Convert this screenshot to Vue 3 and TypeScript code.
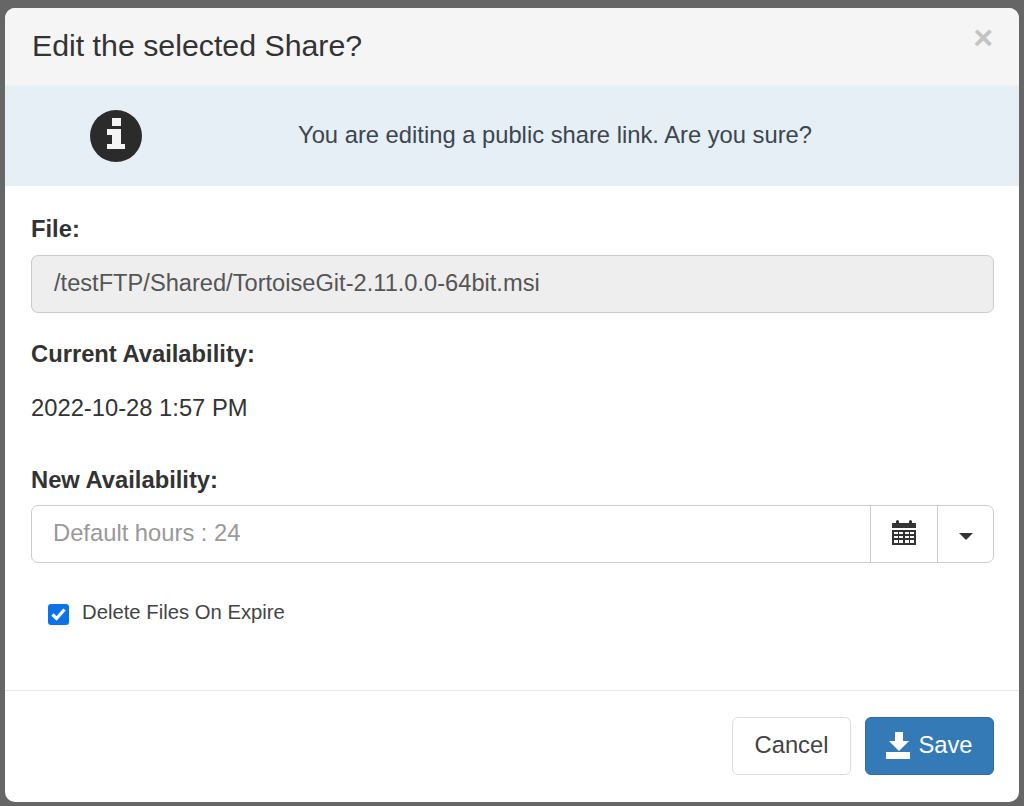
<script setup lang="ts">
const title: string = 'Edit the selected Share?'
</script>

<template>
  <div class="overlay">
    <div class="modal">
      <header class="head">
        <h4>{{ title }}</h4>
        <span class="close">&times;</span>
      </header>
      <div class="banner">
        <svg class="info" viewBox="0 0 52 52" width="52" height="52">
          <circle cx="26" cy="26" r="26" fill="#2b2b2b" />
          <path fill="#f4f4f4" d="M22 8h9v8h-9zM17 19h14v15h4v5H17v-5h5v-9h-5z" />
        </svg>
        <p>You are editing a public share link. Are you sure?</p>
      </div>
      <div class="body">
        <label class="lab first">File:</label>
        <div class="field readonly">/testFTP/Shared/TortoiseGit-2.11.0.0-64bit.msi</div>
        <label class="lab second">Current Availability:</label>
        <div class="static">2022-10-28 1:57 PM</div>
        <label class="lab third">New Availability:</label>
        <div class="group">
          <div class="ginput">Default hours : 24</div>
          <div class="addon cal">
            <svg viewBox="0 0 24 26" width="24" height="26">
              <path fill="#333" d="M0 3h4V1.5a1.5 1.5 0 0 1 3 0V3h10V1.5a1.5 1.5 0 0 1 3 0V3h4v5H0z" />
              <path fill="#333" fill-rule="evenodd" d="M0 10h24v15H0zM2 12v2h4v-2zm5 0v2h4v-2zm6 0v2h4v-2zm5 0v2h4v-2zM2 16v2h4v-2zm5 0v2h4v-2zm6 0v2h4v-2zm5 0v2h4v-2zM2 20v3h4v-3zm5 0v3h4v-3zm6 0v3h4v-3zm5 0v3h4v-3z" />
            </svg>
          </div>
          <div class="addon drop"><span class="caret"></span></div>
        </div>
        <div class="check">
          <span class="box">
            <svg viewBox="0 0 21 21" width="21" height="21">
              <path d="M4.5 10.5l4 4 8-9" fill="none" stroke="#fff" stroke-width="3.2" />
            </svg>
          </span>
          <span class="cl">Delete Files On Expire</span>
        </div>
      </div>
      <footer class="foot">
        <button class="btn cancel" type="button">Cancel</button>
        <button class="btn save" type="button">
          <svg viewBox="0 0 24 28" width="24" height="28">
            <path fill="#fff" d="M9 1h8v9h6L13 20 3 10h6zM0 21h24v7H0z" />
          </svg>
          <span>Save</span>
        </button>
      </footer>
    </div>
  </div>
</template>

<style>
html, body { margin: 0; background: #666; }
</style>

<style scoped>
.overlay {
  height: 806px;
  box-sizing: border-box;
  padding: 8px 5px 4px 5px;
  background: #666;
  font-family: "Liberation Sans", Arial, sans-serif;
  color: #333;
  overflow: hidden;
}
.modal {
  height: 794px;
  background: #fff;
  border-radius: 10px;
  overflow: hidden;
  display: flex;
  flex-direction: column;
}
.head {
  height: 78px;
  flex: none;
  box-sizing: border-box;
  background: #f5f5f5;
  display: flex;
  justify-content: space-between;
  padding: 0 27px;
  align-items: flex-start;
}
.head h4 {
  margin: 0;
  font-size: 30.3px;
  font-weight: 400;
  line-height: 76px;
}
.close {
  font-size: 34px;
  font-weight: 700;
  line-height: 58px;
  color: #c4c4c4;
  margin-right: -1px;
}
.banner {
  height: 100px;
  flex: none;
  background: #e6eef6;
  display: flex;
  align-items: center;
}
.info { margin-left: 85px; flex: none; }
.banner p {
  margin: 0 0 2px 156px;
  font-size: 23.75px;
  color: #3c4650;
}
.body {
  flex: 1;
  padding: 0 25px 0 26px;
  display: flex;
  flex-direction: column;
  font-size: 23.75px;
}
.lab { font-weight: 700; line-height: 30px; font-size: 23.75px; }
.first { margin-top: 28px; }
.second { margin-top: 26px; }
.third { margin-top: 42px; }
.field {
  margin-top: 11px;
  height: 58px;
  box-sizing: border-box;
  border: 1px solid #ccc;
  border-radius: 7px;
  background: #eee;
  color: #555;
  padding: 0 22px;
  line-height: 54px;
  font-size: 23.65px;
}
.static { margin-top: 24px; line-height: 30px; }
.group {
  margin-top: 10px;
  height: 58px;
  box-sizing: border-box;
  border: 1px solid #ccc;
  border-radius: 7px;
  display: flex;
}
.ginput { flex: 1; padding: 0 21px; line-height: 54px; color: #999; }
.addon { border-left: 1px solid #ccc; display: flex; align-items: center; justify-content: center; }
.cal { width: 66px; }
.cal svg { margin-bottom: 3px; }
.drop { width: 55px; }
.caret {
  width: 0; height: 0;
  margin-top: 4px;
  border-left: 7px solid transparent;
  border-right: 7px solid transparent;
  border-top: 7px solid #333;
}
.check {
  display: flex;
  align-items: center;
  margin-top: 37px;
  margin-left: 17px;
  height: 24px;
}
.box {
  width: 21px; height: 21px;
  background: #0b72e8;
  border-radius: 3px;
  margin-top: 5px;
}
.box svg { display: block; }
.cl { margin-left: 13px; font-size: 20.3px; color: #444; }
.foot {
  height: 112px;
  flex: none;
  box-sizing: border-box;
  border-top: 1px solid #e8e8e8;
  display: flex;
  justify-content: flex-end;
  gap: 14px;
  padding: 26px 25px 0 0;
}
.btn {
  height: 58px;
  border-radius: 6px;
  font: 400 23.75px "Liberation Sans", Arial, sans-serif;
  padding: 0 0 2px;
  display: flex;
  align-items: center;
  justify-content: center;
  gap: 8px;
}
.cancel { width: 119px; background: #fff; border: 1px solid #ddd; color: #444; }
.save { width: 129px; background: #337ab7; border: 1px solid #2e6da4; color: #fff; }
</style>
